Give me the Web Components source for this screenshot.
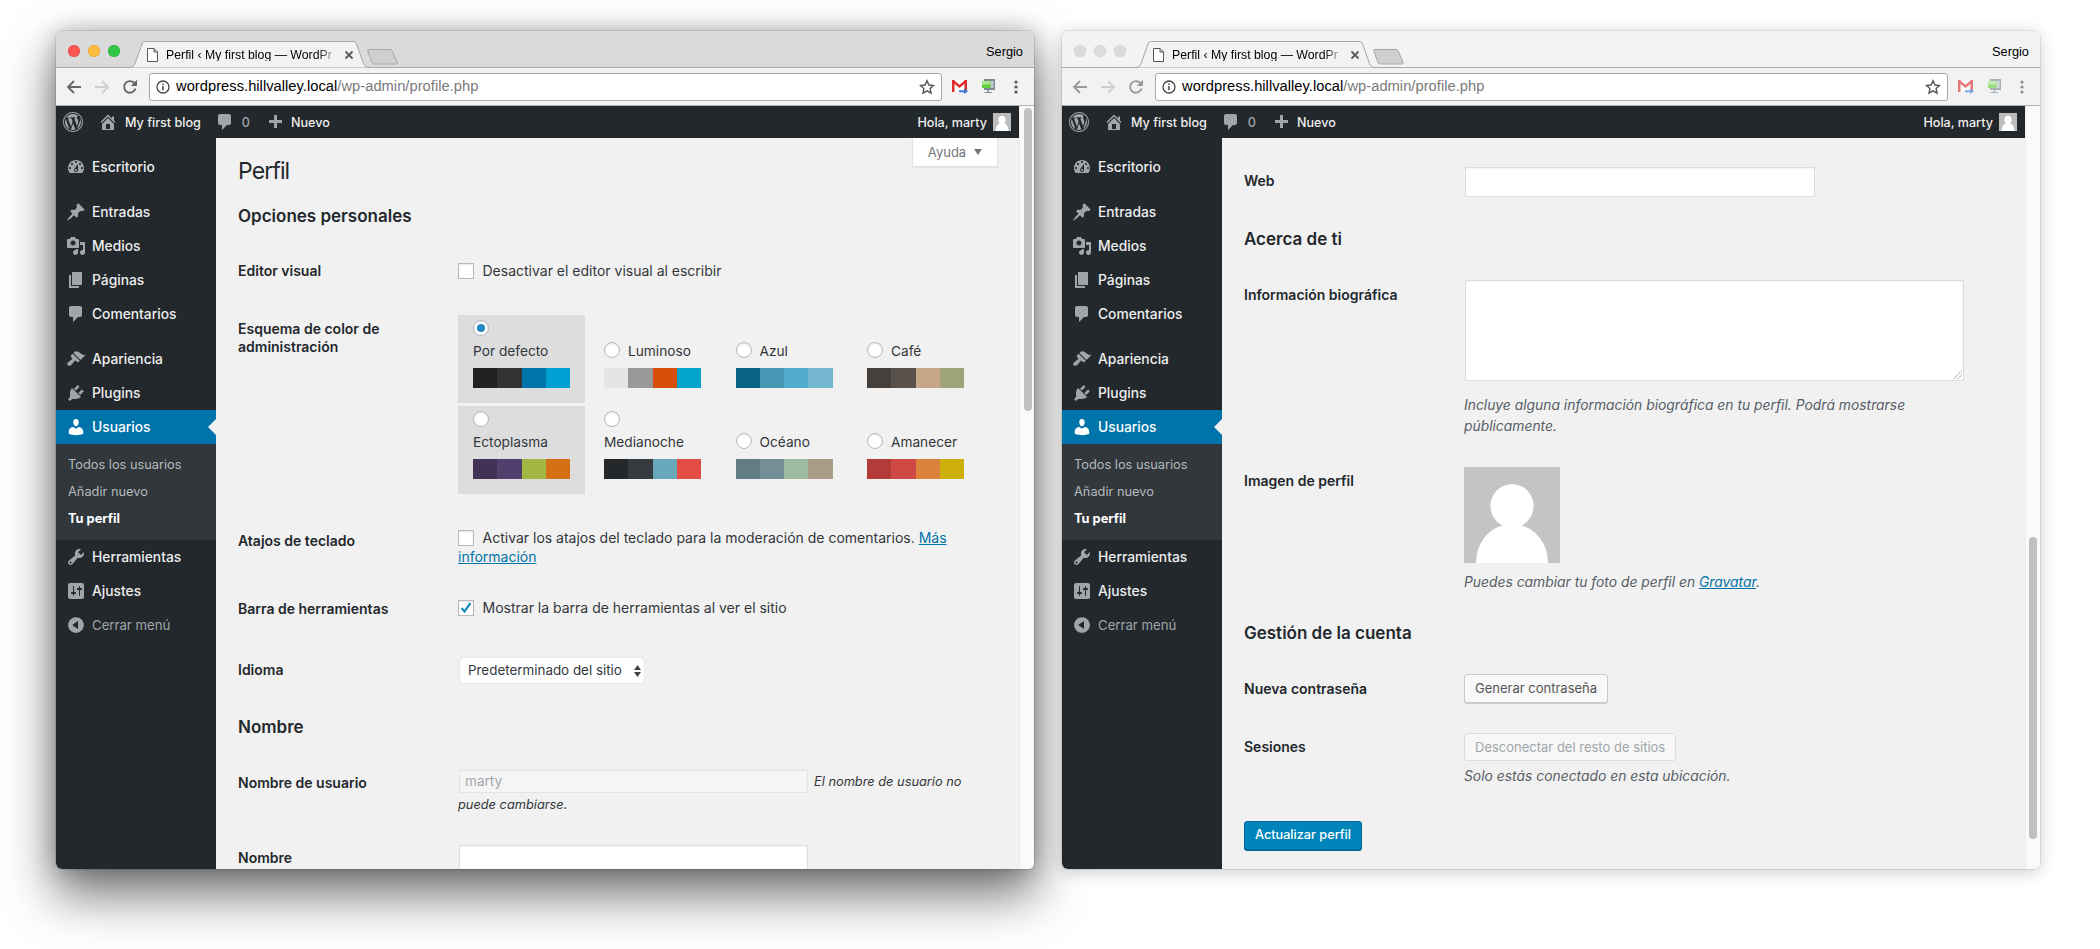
<!DOCTYPE html>
<html lang="es"><head><meta charset="utf-8"><title>Perfil</title>
<style>
html,body{margin:0;padding:0;background:#fff;height:949px;overflow:hidden}
body{font-family:Inter,"Liberation Sans",sans-serif;color:#32373c}
desk-top{display:flex;gap:28px;padding:31px 0 0 56px}
</style></head><body>
<desk-top>
<browser-window active thumb-top="2" thumb-h="303" thumb-left="4">
  <wp-admin current="Tu perfil">
    <wp-help slot="over"></wp-help>
    <wp-title>Perfil</wp-title>
    <wp-h2 style="--mt:18px">Opciones personales</wp-h2>
    <wp-row style="--mt:34px;--pad:0px" label="Editor visual"><wp-check style="margin-top:-1px;margin-bottom:1px">Desactivar el editor visual al escribir</wp-check></wp-row>
    <wp-row style="--mt:34px;--pad:5px" label="Esquema de color de administración"><wp-schemes></wp-schemes></wp-row>
    <wp-row style="--mt:34px;--pad:4px" label="Atajos de teclado"><wp-check wrap>Activar los atajos del teclado para la moderación de comentarios. <wp-link>Más</wp-link> <wp-link>información</wp-link></wp-check></wp-row>
    <wp-row style="--mt:32px;--pad:2px" label="Barra de herramientas"><wp-check checked>Mostrar la barra de herramientas al ver el sitio</wp-check></wp-row>
    <wp-row style="--mt:39px;--pad:4px" label="Idioma"><wp-select>Predeterminado del sitio</wp-select></wp-row>
    <wp-h2 style="--mt:31px">Nombre</wp-h2>
    <wp-row style="--mt:31px;--pad:4px" label="Nombre de usuario"><wp-usernote><wp-input disabled h="24" w="349" style="transform:translateY(-1px)">marty</wp-input><i style="margin-left:6px">El nombre de usuario no</i><br><i>puede cambiarse.</i></wp-usernote></wp-row>
    <wp-row style="--mt:29px;--pad:4px" label="Nombre"><wp-input h="25" w="349"></wp-input></wp-row>
  </wp-admin>
</browser-window>
<browser-window thumb-top="431" thumb-h="302" thumb-left="3">
  <wp-admin current="Tu perfil">
    <wp-row style="--mt:29px;--pad:5px" label="Web"><wp-input h="30" w="350"></wp-input></wp-row>
    <wp-h2 style="--mt:30px">Acerca de ti</wp-h2>
    <wp-row style="--mt:29px;--pad:6px" label="Información biográfica"><wp-input h="101" w="499" area></wp-input><wp-desc style="--mt:14px;--lh:21px;max-width:470px">Incluye alguna información biográfica en tu perfil. Podrá mostrarse públicamente.</wp-desc></wp-row>
    <wp-row style="--mt:30px;--pad:5px" label="Imagen de perfil"><wp-avatar></wp-avatar><wp-desc style="--mt:9px;--lh:21px">Puedes cambiar tu foto de perfil en <wp-link>Gravatar</wp-link>.</wp-desc></wp-row>
    <wp-h2 style="--mt:28px">Gestión de la cuenta</wp-h2>
    <wp-row style="--mt:29px;--pad:6px" label="Nueva contraseña"><wp-button style="height:29px">Generar contraseña</wp-button></wp-row>
    <wp-row style="--mt:30px;--pad:5px" label="Sesiones"><wp-button disabled>Desconectar del resto de sitios</wp-button><wp-desc style="--mt:6px;--lh:18px">Solo estás conectado en esta ubicación.</wp-desc></wp-row>
    <wp-button primary style="margin-top:36px;height:29px">Actualizar perfil</wp-button>
  </wp-admin>
</browser-window>
</desk-top>
<script>
const PATHS={
dashboard:"M3.76 16h12.48c1.1-1.37 1.76-3.11 1.76-5 0-4.42-3.58-8-8-8s-8 3.58-8 8c0 1.89.66 3.63 1.76 5zM10 4c.55 0 1 .45 1 1s-.45 1-1 1-1-.45-1-1 .45-1 1-1zM6 6c.55 0 1 .45 1 1s-.45 1-1 1-1-.45-1-1 .45-1 1-1zm8 0c.55 0 1 .45 1 1s-.45 1-1 1-1-.45-1-1 .45-1 1-1zm-5.37 5.55L12 7v6c0 1.1-.9 2-2 2s-2-.9-2-2c0-.57.24-1.08.63-1.45zM4 10c.55 0 1 .45 1 1s-.45 1-1 1-1-.45-1-1 .45-1 1-1zm12 0c.55 0 1 .45 1 1s-.45 1-1 1-1-.45-1-1 .45-1 1-1zm-5 3c0-.55-.45-1-1-1s-1 .45-1 1 .45 1 1 1 1-.45 1-1z",
pin:"M10.44 3.02l1.82-1.82 6.36 6.35-1.83 1.82c-1.05-.68-2.48-.57-3.41.36l-.75.75c-.92.93-1.04 2.35-.35 3.41l-1.83 1.82-2.41-2.41-2.8 2.79c-.42.42-3.38 2.71-3.8 2.29s1.86-3.39 2.28-3.81l2.79-2.79L4.1 9.36l1.83-1.82c1.05.69 2.48.57 3.4-.36l.75-.75c.93-.92 1.05-2.35.36-3.41z",
media:"M13 11V4c0-.55-.45-1-1-1h-1.67L9 1H5L3.67 3H2c-.55 0-1 .45-1 1v7c0 .55.45 1 1 1h10c.55 0 1-.45 1-1zM7 4.5c1.38 0 2.5 1.12 2.5 2.5S8.38 9.5 7 9.5 4.5 8.38 4.5 7 5.62 4.5 7 4.5zM14 6h5v10.5c0 1.38-1.12 2.5-2.5 2.5S14 17.88 14 16.5s1.12-2.5 2.5-2.5c.17 0 .34.02.5.05V9h-3V6zm-4 8.05V13h2v3.5c0 1.38-1.12 2.5-2.5 2.5S7 17.88 7 16.5 8.12 14 9.5 14c.17 0 .34.02.5.05z",
page:"M6 15V2h10v13H6zm-1 1h8v2H3V5h2v11z",
comment:"M5 2h9c1.1 0 2 .9 2 2v7c0 1.1-.9 2-2 2h-2l-5 5v-5H5c-1.1 0-2-.9-2-2V4c0-1.1.9-2 2-2z",
brush:"M14.48 11.06L7.41 3.99l1.5-1.5c.5-.56 2.3-.47 3.51.32 1.21.8 1.43 1.28 2.91 2.1 1.18.64 2.45 1.26 4.45.85zm-.71.71L6.7 4.7 4.93 6.47c-.39.39-.39 1.02 0 1.41l1.06 1.06c.39.39.39 1.03 0 1.42-.6.6-1.43 1.11-2.21 1.69-.35.26-.7.53-1.01.84C1.43 13.23.4 14.75 1.8 16.15c1.41 1.41 2.92.38 4.25-.95.31-.31.58-.66.84-1.01.58-.78 1.09-1.61 1.69-2.21.39-.39 1.02-.39 1.41 0l1.06 1.06c.39.39 1.02.39 1.41 0z",
plug:"M13.11 4.36L9.87 7.6 8 5.73l3.24-3.24c.35-.34 1.05-.2 1.56.32.52.51.66 1.21.31 1.55zm-8 1.77l.91-1.12 9.01 9.01-1.19.84c-.71.71-2.63 1.16-3.82 1.16H6.14L4.9 17.26c-.59.59-1.54.59-2.12 0-.59-.58-.59-1.53 0-2.12l1.24-1.24v-3.88c0-1.13.4-3.19 1.09-3.89zm7.26 3.97l3.24-3.24c.34-.35 1.04-.21 1.55.31.52.51.66 1.21.31 1.55l-3.24 3.25z",
user:"M10 9.25c-2.27 0-2.73-3.44-2.73-3.44C7 4.02 7.82 2 9.97 2c2.16 0 2.98 2.02 2.71 3.81 0 0-.41 3.44-2.68 3.44zm0 2.57L12.72 10c2.39 0 4.52 2.33 4.52 4.53v2.49s-3.65 1.13-7.24 1.13c-3.65 0-7.24-1.13-7.24-1.13v-2.49c0-2.25 1.94-4.48 4.47-4.48z",
tools:"M16.68 9.77c-1.34 1.34-3.3 1.67-4.95.99l-5.41 6.52c-.99.99-2.59.99-3.58 0s-.99-2.59 0-3.57l6.52-5.42c-.68-1.65-.35-3.61.99-4.95 1.28-1.28 3.12-1.62 4.72-1.06l-2.89 2.89 2.82 2.82 2.86-2.87c.53 1.58.18 3.39-1.08 4.65zM3.81 16.21c.4.39 1.04.39 1.43 0 .4-.4.4-1.04 0-1.43-.39-.4-1.03-.4-1.43 0-.39.39-.39 1.03 0 1.43z",
settings:"M18 16V4c0-1.1-.9-2-2-2H4c-1.1 0-2 .9-2 2v12c0 1.1.9 2 2 2h12c1.1 0 2-.9 2-2zM8 11h1c.55 0 1 .45 1 1s-.45 1-1 1H8v1.5c0 .28-.22.5-.5.5s-.5-.22-.5-.5V13H6c-.55 0-1-.45-1-1s.45-1 1-1h1V5.5c0-.28.22-.5.5-.5s.5.22.5.5V11zm5-2h-1c-.55 0-1-.45-1-1s.45-1 1-1h1V5.5c0-.28.22-.5.5-.5s.5.22.5.5V7h1c.55 0 1 .45 1 1s-.45 1-1 1h-1v5.5c0 .28-.22.5-.5.5s-.5-.22-.5-.5V9z",
collapse:"M10 2.16c4.33 0 7.84 3.51 7.84 7.84s-3.51 7.84-7.84 7.84S2.16 14.33 2.16 10 5.71 2.16 10 2.16zm2 11.72V6.12L6.18 9.97z",
home:"M16 8.5l1.53 1.53-1.06 1.06L10 4.62l-6.47 6.47-1.06-1.06L10 2.5l4 4v-2h2v4zm-6-2.46l6 5.99V18H4v-5.97zM12 17v-5H8v5h4z",
plus:"M17 7v3h-5v5H9v-5H4V7h5V2h3v5h5z",
wp:"M20 10c0-5.52-4.48-10-10-10S0 4.48 0 10s4.48 10 10 10 10-4.48 10-10zM10 1.01c4.97 0 8.99 4.02 8.99 8.99s-4.02 8.99-8.99 8.99S1.01 14.97 1.01 10 5.03 1.01 10 1.01zM8.01 14.82L4.96 6.61c.49-.03 1.05-.08 1.05-.08.43-.05.38-1.01-.06-.99 0 0-1.29.1-2.13.1-.15 0-.33 0-.52-.01 1.44-2.17 3.9-3.6 6.7-3.6 2.09 0 3.99.79 5.41 2.09-.6-.08-1.45.35-1.45 1.42 0 .66.38 1.22.79 1.88.31.54.5 1.22.5 2.21 0 1.34-1.27 4.48-1.27 4.48l-2.71-7.5c.48-.03.75-.16.75-.16.43-.04.38-1.1-.05-1.08 0 0-1.3.11-2.14.11-.78 0-2.11-.11-2.11-.11-.43-.02-.48 1.06-.05 1.08l.84.08 1.12 3.04zm6.02 2.15L16.64 10s.67-1.69.39-3.81c.63 1.14.94 2.42.94 3.81 0 2.96-1.56 5.58-3.94 6.97zM2.68 6.77L6.5 17.25c-2.67-1.3-4.47-4.08-4.47-7.25 0-1.16.2-2.23.65-3.23zm7.45 4.53l2.29 6.25c-.75.27-1.57.42-2.42.42-.72 0-1.41-.11-2.06-.3z"
};
const FONT='Inter,"Liberation Sans",sans-serif';
function el(name,css,html){
  customElements.define(name,class extends HTMLElement{
    constructor(){super();this.attachShadow({mode:'open'});}
    connectedCallback(){
      const h=typeof html==='function'?html(this):html;
      this.shadowRoot.innerHTML='<style>'+css+'</style>'+h;
    }
  });
}
el('wp-icon',':host{display:inline-flex;width:var(--s,20px);height:var(--s,20px);flex:none}svg{width:100%;height:100%;fill:currentColor;display:block}',
  e=>`<svg viewBox="0 0 20 20"><path d="${PATHS[e.getAttribute('name')]}"/></svg>`);

el('browser-window',`
:host{display:flex;flex-direction:column;flex:none;width:978px;height:838px;border-radius:6px;
  box-shadow:0 0 0 1px rgba(0,0,0,.08),0 4px 16px rgba(0,0,0,.14),0 0 24px rgba(0,0,0,.06)}
:host([active]){box-shadow:0 0 0 1px rgba(0,0,0,.1),0 24px 50px 2px rgba(0,0,0,.55),0 0 22px rgba(0,0,0,.22)}
.clip{display:flex;flex-direction:column;height:100%;border-radius:6px;overflow:hidden;background:#f1f1f1}
.strip{height:36px;flex:none;display:flex;align-items:flex-start;background:#f3f3f3;border-bottom:1px solid #aaa;font:12px/1 "Liberation Sans",sans-serif;color:#000}
:host([active]) .strip{background:#dadada}
.lights{display:flex;gap:8px;margin:14px 8px 0 12px}
.lights b{width:12px;height:12px;border-radius:50%;background:#dcdcdc;border:0;box-shadow:inset 0 0 0 .5px #d0d0d0}
:host([active]) .lights b:nth-child(1){background:#fc5753;box-shadow:inset 0 0 0 .5px #df4744}
:host([active]) .lights b:nth-child(2){background:#fdbc40;box-shadow:inset 0 0 0 .5px #de9f34}
:host([active]) .lights b:nth-child(3){background:#33c748;box-shadow:inset 0 0 0 .5px #27aa35}
.tab{position:relative;z-index:1;flex:none;width:242px;height:27px;margin-top:10px;display:flex;align-items:center;padding-left:19px;box-sizing:border-box}
.tab>svg.shape{position:absolute;left:0;top:0;width:242px;height:27px;z-index:-1}
.tab .doc{width:11px;height:14px;flex:none}
.title{margin-left:8px;width:172px;white-space:nowrap;overflow:hidden;font-size:12.3px;-webkit-mask-image:linear-gradient(90deg,#000 88%,transparent);mask-image:linear-gradient(90deg,#000 88%,transparent);padding-top:1px}
.x{margin-left:6px;width:10px;height:10px;flex:none}
.new{flex:none;width:34px;height:17px;margin:17px 0 0 -3px}
.user{margin:15px 11px 0 auto;font-size:12.8px}
.bar{height:37px;flex:none;display:flex;align-items:center;padding:0 4px;background:#f2f2f2;border-bottom:1px solid #b2b2b2;box-sizing:content-box}
.btn{width:28px;height:28px;display:flex;align-items:center;justify-content:center;flex:none}
.btn svg{display:block}
.omni{flex:1;height:26px;margin:0 4px 0 5px;background:#fff;border:1px solid #a9a9a9;border-radius:3px;display:flex;align-items:center;font:14.7px/1 "Liberation Sans",sans-serif;color:#000;letter-spacing:.03px}
.omni .i{margin:0 6px 0 6px;flex:none}
.omni span{color:#7a7a7a}
.omni .star{margin:0 6px 0 auto;flex:none}
:host(:not([active])) .ext{opacity:.62}
.page{flex:1;display:flex;min-height:0}
.main{flex:1;min-width:0;display:flex}
.track{width:14px;flex:none;background:#fafafa;border-left:1px solid #ececec}
.thumb{width:8px;background:#c1c1c1;border-radius:4px}
`,e=>`
<div class="clip">
<div class="strip">
 <div class="lights"><b></b><b></b><b></b></div>
 <div class="tab">
  <svg class="shape" viewBox="0 0 242 27"><path d="M0 26.5c4 0 6-1 7-4L14 3c.7-1.8 1.8-2.5 3.5-2.500H225c1.700 0 2.800.7 3.500 2.500l7 19.500c1 3 3 4 6.500 4" fill="#f2f2f2" stroke="#a4a4a4"/></svg>
  <svg class="doc" viewBox="0 0 11 14"><path d="M.5.5h6.500l3.500 3.500v9.500H.5zM7 .5V4h3.500" fill="#fff" stroke="#555"/></svg>
  <span class="title">Perfil ‹ My first blog — WordPr</span>
  <svg class="x" viewBox="0 0 10 10"><path d="M1.500 1.500l7 7M8.500 1.500l-7 7" stroke="#5a5a5a" stroke-width="1.800"/></svg>
 </div>
 <svg class="new" viewBox="0 0 34 17"><path d="M1 1.500H23c1 0 1.800.5 2.200 1.500l5 11.500c.3.800 0 1.500-1 1.500H7c-1 0-1.500-.4-2-1.300L.7 2.500C.4 1.800.5 1.500 1 1.500z" fill="#cfcfcf" stroke="#a8a8a8"/></svg>
 <div class="user">Sergio</div>
</div>
<div class="bar">
 <div class="btn"><svg width="16" height="16" viewBox="0 0 16 16"><path d="M15 8H2.500M8 2L2 8l6 6" fill="none" stroke="${e.hasAttribute('active')?'#666':'#9a9a9a'}" stroke-width="1.800"/></svg></div>
 <div class="btn"><svg width="16" height="16" viewBox="0 0 16 16"><path d="M1 8h12.500M8 2l6 6-6 6" fill="none" stroke="#cfcfcf" stroke-width="1.800"/></svg></div>
 <div class="btn"><svg width="16" height="16" viewBox="0 0 16 16"><path d="M13.500 9.500A5.800 5.800 0 1 1 12.200 4L14 6" fill="none" stroke="${e.hasAttribute('active')?'#666':'#9a9a9a'}" stroke-width="1.900"/><path d="M15 .8V7H8.800z" fill="${e.hasAttribute('active')?'#666':'#9a9a9a'}"/></svg></div>
 <div class="omni">
  <svg class="i" width="14" height="14" viewBox="0 0 14 14"><circle cx="7" cy="7" r="6" fill="none" stroke="#444" stroke-width="1.300"/><path d="M7 6v4.300M7 3.500v1.500" stroke="#444" stroke-width="1.500"/></svg>
  wordpress.hillvalley.local<span>/wp-admin/profile.php</span>
  <svg class="star" width="16" height="16" viewBox="0 0 16 16"><path d="M8 1.800l1.900 4.200 4.600.5-3.400 3.100.9 4.500-4-2.300-4 2.300.9-4.500L1.500 6.500l4.600-.5z" fill="none" stroke="#555" stroke-width="1.400"/></svg>
 </div>
 <div class="btn ext"><svg width="16" height="15" viewBox="0 0 16 15"><path d="M0 1h15v12H0z" fill="#fff" stroke="none"/><path d="M0 1h2.500v12H0zM12.500 1H15v12h-2.500z" fill="#e02c2c"/><path d="M1 2l6.500 5.500L14 2" fill="none" stroke="#e02c2c" stroke-width="2.400"/><path d="M7 11.300h5V9.500l4 3-4 2.500v-1.800H7z" fill="#3b78d8"/></svg></div>
 <div class="btn ext"><svg width="15" height="16" viewBox="0 0 15 16"><path d="M3 0h11v11H3z" fill="#7f8c94"/><path d="M9.500 2H12.500v7H9.500z" fill="#c2ccd2"/><path d="M1 2h8.500v7H1z" fill="#62d23c"/><path d="M1 2h8.500v3.500H1z" fill="#a8e88c"/><path d="M6.500 11h1.500v2h3v1H3.500v-1h3z" fill="#7f8c94"/></svg></div>
 <div class="btn"><svg width="4" height="14" viewBox="0 0 4 14" fill="${e.hasAttribute('active')?'#555':'#8f8f8f'}"><circle cx="2" cy="2" r="1.600"/><circle cx="2" cy="7" r="1.600"/><circle cx="2" cy="12" r="1.600"/></svg></div>
</div>
<div class="page">
 <div class="main"><slot></slot></div>
 <div class="track"><div class="thumb" style="margin-top:${e.getAttribute('thumb-top')}px;height:${e.getAttribute('thumb-h')}px;margin-left:${e.getAttribute('thumb-left')}px"></div></div>
</div>
</div>`);

const MENU=[['dashboard','Escritorio',12],['pin','Entradas',11],['media','Medios'],['page','Páginas'],['comment','Comentarios'],['brush','Apariencia',11],['plug','Plugins'],['user','Usuarios',0,1],['tools','Herramientas'],['settings','Ajustes'],['collapse','Cerrar menú',0,0,1]];
el('wp-admin',`
:host{display:flex;flex-direction:column;flex:1;min-width:0;overflow:hidden;font-family:${FONT}}
.ab{height:32px;box-sizing:border-box;padding-top:2px;flex:none;background:#23282d;color:#eee;display:flex;align-items:center;font:500 12.6px/1 ${FONT}}
.ab wp-icon{color:#a0a5aa;transform:translateY(-1px)}
.ab .grey{color:#a0a5aa}
.ab .hola{margin-left:auto}
.mini{width:18px;height:18px;margin:-2px 8px 0 6px;display:block;flex:none}
.body{flex:1;display:flex;min-height:0}
nav{width:160px;flex:none;background:#23282d}
.it{height:34px;box-sizing:border-box;padding-top:2px;display:flex;align-items:center;color:#eee;font:500 13.8px/1 ${FONT};position:relative}
.it wp-icon{color:#a0a5aa;margin:-2px 6px 0 10px;}
.it.on{background:#0073aa;color:#fff}
.it.on wp-icon{color:#fff}
.it.on::after{content:"";position:absolute;right:0;top:9px;border:8px solid transparent;border-right-color:#f1f1f1;border-left:0}
.it.dim{color:#a0a5aa;font-weight:400;font-size:13.2px}
.sub{background:#32373c;padding:7px 0 8px;color:#b4b9be;font:400 12.8px/1 ${FONT}}
.sub div{height:27px;box-sizing:border-box;padding-top:2px;display:flex;align-items:center;padding-left:12px}
.sub .cur{color:#fff;font-weight:700}
.content{flex:1;min-width:0;padding:0 22px;position:relative;display:flex;flex-direction:column;align-items:stretch;overflow:hidden}
`,e=>`
<div class="ab">
 <wp-icon name="wp" style="margin:0 6px 0 7px"></wp-icon>
 <wp-icon name="home" style="margin:0 7px 0 9px"></wp-icon>My first blog
 <wp-icon name="comment" style="margin:0 7px 0 14px"></wp-icon><span class="grey">0</span>
 <wp-icon name="plus" style="margin:2px 6px 0 15px"></wp-icon>Nuevo
 <span class="hola">Hola, marty</span>
 <svg class="mini" viewBox="0 0 18 18"><rect width="18" height="18" fill="#bcbcbc"/><ellipse cx="9" cy="7" rx="3.600" ry="4.200" fill="#fff"/><path d="M2.500 18c0-5 2.500-8 6.500-8s6.500 3 6.500 8z" fill="#fff"/></svg>
</div>
<div class="body">
 <nav>${MENU.map(m=>`<div class="it ${m[3]?'on':''} ${m[4]?'dim':''}" style="margin-top:${m[2]||0}px"><wp-icon name="${m[0]}"></wp-icon>${m[1]}</div>${m[3]?'<div class="sub"><div>Todos los usuarios</div><div>Añadir nuevo</div><div class="cur">Tu perfil</div></div>':''}`).join('')}</nav>
 <div class="content"><slot name="over"></slot><slot></slot></div>
</div>`);

el('wp-help',`:host{display:flex;position:absolute;right:21px;top:0;width:86px;height:29px;box-sizing:border-box;background:#fff;border:1px solid #e1e1e1;border-top:0;box-shadow:0 1px 1px rgba(0,0,0,.04);align-items:center;justify-content:center;gap:8px;color:#72777c;font:400 13px/1 ${FONT}}
svg{display:block}`,`Ayuda<svg width="8" height="6" viewBox="0 0 8 6"><path d="M0 0h8L4 6z" fill="#72777c"/></svg>`);
el('wp-title',`:host{display:block;margin-top:19px;font:400 23px/29px ${FONT};letter-spacing:-.9px;color:#23282d}`,`<slot></slot>`);
el('wp-h2',`:host{display:block;margin-top:var(--mt);font:600 17px/24px ${FONT};color:#23282d}`,`<slot></slot>`);
el('wp-row',`:host{display:grid;grid-template-columns:220px 1fr;margin-top:var(--mt)}
.l{padding-top:var(--pad);font:600 14px/18px ${FONT};color:#23282d;padding-right:30px}
.c{min-width:0;font:400 14px/19px ${FONT};color:#32373c}`,e=>`<div class="l">${e.getAttribute('label')}</div><div class="c"><slot></slot></div>`);
el('wp-link',`:host{display:inline;color:#0073aa;text-decoration:underline}`,`<slot></slot>`);
el('wp-check',`:host{display:block;font:400 14px/19px ${FONT};color:#32373c}
.b{display:inline-block;width:16px;height:16px;box-sizing:border-box;background:#fff;border:1px solid #b4b9be;margin-right:8.500px;vertical-align:-3px;box-shadow:inset 0 1px 2px rgba(0,0,0,.1)}
.b svg{display:block;margin:-1px}`,e=>`<span class="b">${e.hasAttribute('checked')?'<svg width="16" height="16" viewBox="0 0 16 16"><path d="M3.500 8l3 3.500L12.500 3" fill="none" stroke="#1e8cbe" stroke-width="2.200"/></svg>':''}</span><slot></slot>`);
el('wp-select',`:host{display:inline-flex;box-sizing:border-box;width:186px;height:27px;margin-left:1px;background:#fff;border:1px solid #e6e6e6;border-radius:5px;align-items:center;padding-left:8px;font:400 13.4px/1 ${FONT};color:#32373c;white-space:nowrap}
svg{margin-left:auto;margin-right:3px;flex:none}`,`<slot></slot><svg width="7" height="12" viewBox="0 0 7 12"><path d="M3.500 0L7 5H0zM0 7h7l-3.500 5z" fill="#444"/></svg>`);
el('wp-input',`:host{display:inline-block;box-sizing:border-box;background:#fff;border:1px solid #ddd;margin-left:1px;box-shadow:inset 0 1px 2px rgba(0,0,0,.05);vertical-align:middle;padding:0 5px;font:400 13.600px/22px ${FONT};color:#a0a5aa;position:relative}
:host([disabled]){background:#f5f5f5;border-color:#e4e4e4}
svg{position:absolute;right:1px;bottom:1px;display:block}`,e=>{e.style.width=e.getAttribute('w')+'px';e.style.height=e.getAttribute('h')+'px';return '<slot></slot>'+(e.hasAttribute('area')?'<svg width="9" height="9" viewBox="0 0 9 9"><path d="M1 8.500L8.500 1M5 8.500L8.500 5" stroke="#555" stroke-dasharray="1 1"/></svg>':'')});
el('wp-usernote',`:host{display:block;font:400 12.8px/22px ${FONT};color:#32373c}`,`<slot></slot>`);
el('wp-desc',`:host{display:block;margin-top:var(--mt);font:italic 400 13.85px/var(--lh) ${FONT};color:#555d66}`,`<slot></slot>`);
el('wp-avatar',`:host{display:block;width:96px;height:96px}svg{display:block}`,`<svg width="96" height="96" viewBox="0 0 96 96"><rect width="96" height="96" fill="#c4c4c4"/><ellipse cx="48" cy="39" rx="21.500" ry="22" fill="#fff"/><path d="M12 96C12 74 28 57 48 57s36 17 36 39z" fill="#fff"/></svg>`);
el('wp-button',`:host{display:inline-flex;align-self:flex-start;align-items:center;box-sizing:border-box;height:28px;padding:0 10px;background:#f9f9f9;border:1px solid #ccc;border-radius:3px;box-shadow:0 1px 0 #ccc;font:400 13px/1 ${FONT};color:#555;white-space:nowrap}
:host([disabled]){background:#f7f7f7;border-color:#ddd;color:#a0a5aa;box-shadow:none}
:host([primary]){background:#0085ba;border-color:#006799;color:#fff;box-shadow:0 1px 0 #006799;font-weight:500;font-size:12.7px}`,`<slot></slot>`);
const SCH=[['Por defecto',['#222','#333','#0073aa','#00a0d2'],1,1,1],['Luminoso',['#e5e5e5','#999','#d64e07','#04a4cc']],['Azul',['#096484','#4796b3','#52accc','#74b6ce']],['Café',['#46403c','#59524c','#c7a589','#9ea476']],
['Ectoplasma',['#413256','#523f6d','#a3b745','#d46f15'],1,0,1],['Medianoche',['#25282b','#363b3f','#69a8bb','#e14d43'],1],['Océano',['#627c83','#738e96','#9ebaa0','#aa9d88']],['Amanecer',['#b43c38','#cf4944','#dd823b','#ccaf0b']]];
el('wp-schemes',`:host{display:grid;grid-template-columns:131px 131.500px 131.500px 131.500px;row-gap:3px}
.o{width:127px;height:88px;box-sizing:border-box;padding:5px 15px 0}
.o.sel{background:#ddd}
.h{height:40px;display:flex;align-items:flex-end;gap:8px;font:400 13.700px/18px ${FONT};color:#32373c;white-space:nowrap}
.h.st{flex-direction:column;align-items:flex-start;justify-content:space-between;gap:0}
.r{width:16px;height:16px;box-sizing:border-box;border-radius:50%;background:#fff;border:1px solid #b4b9be;box-shadow:inset 0 1px 2px rgba(0,0,0,.1);margin-bottom:2px;display:flex;align-items:center;justify-content:center;flex:none}
.h.st .r{margin-bottom:0}
.r i{width:8px;height:8px;border-radius:50%;background:#1e8cbe}
.s{display:flex;height:20px;margin-top:8px}.s b{flex:1}`,
SCH.map(s=>`<div class="o ${s[4]?'sel':''}"><div class="h ${s[2]?'st':''}"><span class="r">${s[3]?'<i></i>':''}</span><span>${s[0]}</span></div><div class="s">${s[1].map(c=>`<b style="background:${c}"></b>`).join('')}</div></div>`).join(''));
</script>
</body></html>
